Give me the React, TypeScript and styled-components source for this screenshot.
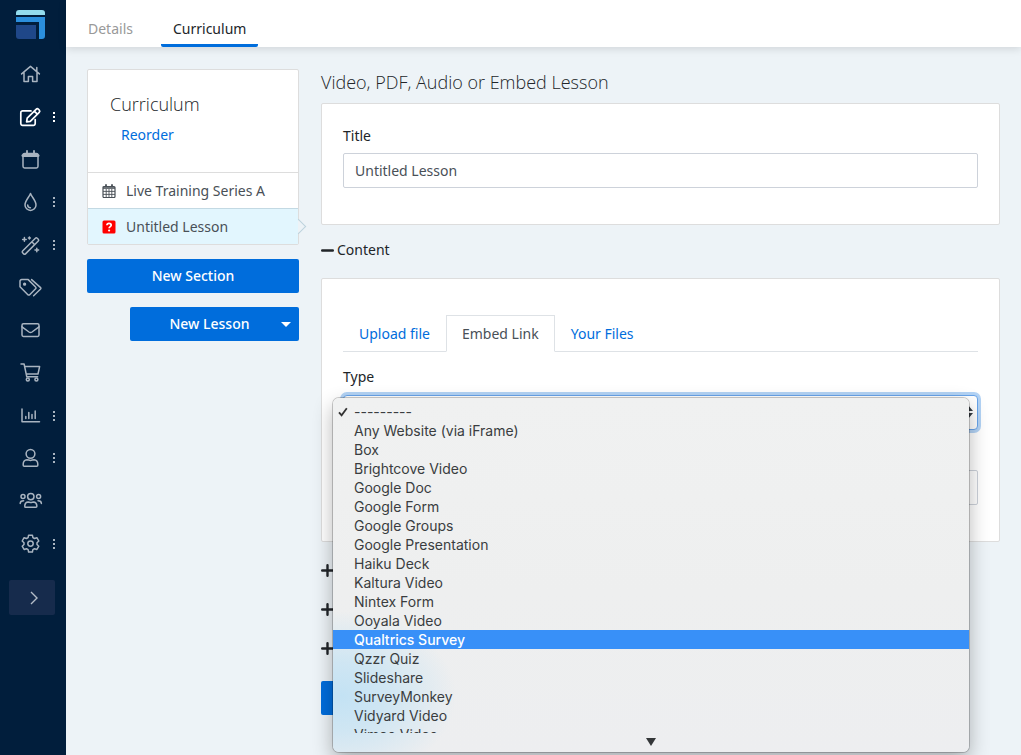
import React from 'react';
import styled, { createGlobalStyle, css } from 'styled-components';

const GlobalStyle = createGlobalStyle`
  *, *::before, *::after { box-sizing: border-box; }
  body {
    margin: 0;
    background: #edf3f7;
    color: #212529;
    font-family: 'Noto Sans', 'Open Sans', sans-serif;
    font-size: 14px;
    line-height: 20px;
  }
  h1, h2, h3, p, ul { margin: 0; padding: 0; }
  ul { list-style: none; }
  button, input, select { font: inherit; }
  a { color: #006ddc; text-decoration: none; }
`;

const Shell = styled.div`
  display: flex;
  min-height: 100vh;
`;

/* ---------- navigation rail ---------- */

const Rail = styled.nav`
  flex: 0 0 66px;
  background: #011e3c;
  display: flex;
  flex-direction: column;
  align-items: center;
  padding-top: 10px;
`;

const LogoLink = styled.a`
  display: block;
  width: 30px;
  height: 30px;
  margin-right: 4px;
  svg { display: block; }
`;

const RailList = styled.ul`
  width: 100%;
  height: 512px;
  margin-top: 13px;
  display: grid;
  grid-template-rows: repeat(12, 1fr);
`;

const RailItem = styled.li`
  display: flex;
  align-items: center;
  padding-left: 19px;
`;

const RailLink = styled.a<{ $active?: boolean }>`
  display: flex;
  align-items: center;
  gap: 9px;
  color: ${(p) => (p.$active ? '#ffffff' : '#a9b4c0')};
  svg {
    display: block;
    fill: none;
    stroke: currentColor;
    stroke-width: ${(p) => (p.$active ? 1.7 : 1.5)};
    stroke-linecap: round;
    stroke-linejoin: round;
  }
`;

const Expand = styled.button`
  width: 46px;
  height: 35px;
  margin: 15px 2px 0 0;
  padding: 0 0 0 4px;
  border: 0;
  border-radius: 2px;
  background: #162b4c;
  color: #b4bdc8;
  display: flex;
  align-items: center;
  justify-content: center;
`;

/* ---------- page frame ---------- */

const Page = styled.div`
  flex: 1;
  min-width: 0;
`;

const TopTabs = styled.header`
  height: 47px;
  padding-left: 10px;
  display: flex;
  gap: 16px;
  background: #ffffff;
  box-shadow: 0 2px 8px rgba(0, 0, 0, 0.12);
`;

const TopTab = styled.a<{ $active?: boolean }>`
  padding: 19px 12px 0;
  color: ${(p) => (p.$active ? '#212529' : '#999999')};
  border-bottom: 3px solid ${(p) => (p.$active ? '#006ddc' : 'transparent')};
  border-radius: 2px;
`;

const Columns = styled.main`
  display: grid;
  grid-template-columns: 212px 1fr;
  gap: 22px;
  padding: 22px 21px 0;
  align-items: start;
`;

/* ---------- outline column ---------- */

const Outline = styled.aside`
  display: flex;
  flex-direction: column;
  align-items: flex-end;
  gap: 14px;
`;

const OutlineCard = styled.section`
  width: 100%;
  background: #ffffff;
  border: 1px solid #dddddd;
  border-radius: 2px;
`;

const OutlineHead = styled.div`
  height: 102px;
  padding: 22px 22px 0;
`;

const Heading = styled.h2`
  font-family: 'Open Sans', 'Noto Sans', sans-serif;
  font-size: 18px;
  font-weight: 300;
  line-height: 24px;
`;

const ReorderLink = styled.a`
  display: inline-block;
  margin: 9px 0 0 11px;
`;

const LessonRow = styled.li<{ $active?: boolean }>`
  position: relative;
  height: 36px;
  border-top: 1px solid #dddddd;
  ${(p) =>
    p.$active &&
    css`
      background: #e2f6fe;
      border-color: #c3d9e3;
      &::after {
        content: '';
        position: absolute;
        right: -6px;
        top: 12px;
        width: 11px;
        height: 11px;
        border: solid #bdd3dd;
        border-width: 1px 1px 0 0;
        background: linear-gradient(45deg, transparent 50%, #edf3f7 50%);
        transform: rotate(45deg);
      }
    `}
`;

const LessonLink = styled.a`
  display: flex;
  align-items: center;
  gap: 10px;
  height: 35px;
  padding-left: 14px;
  color: #495057;
`;

const Primary = styled.button<{ $width: string }>`
  position: relative;
  width: ${(p) => p.$width};
  height: 34px;
  padding: 0;
  border: 0;
  border-radius: 2px;
  background: #006ddc;
  color: #ffffff;
  display: flex;
  align-items: center;
  justify-content: center;
`;

const ButtonText = styled.span<{ $caret?: boolean }>`
  font-weight: 500;
  padding-right: ${(p) => (p.$caret ? '10px' : '0')};
`;

const Caret = styled.span`
  position: absolute;
  right: 8px;
  top: 15px;
  border: 5px solid transparent;
  border-top-color: #ffffff;
  border-bottom: 0;
`;

/* ---------- editor column ---------- */

const Editor = styled.form`
  min-width: 0;
  padding-top: 1px;
`;

const Card = styled.section`
  background: #ffffff;
  border: 1px solid #dddddd;
  border-radius: 2px;
  padding: 22px 21px 36px;
`;

const TitleCard = styled(Card)`
  margin-top: 9px;
`;

const Label = styled.label`
  display: block;
`;

const TextInput = styled.input`
  display: block;
  width: 100%;
  height: 35px;
  padding: 0 11px;
  border: 1px solid #cdd2da;
  border-radius: 2px;
  background: #ffffff;
  color: #495057;
`;

const TitleInput = styled(TextInput)`
  margin-top: 7px;
`;

const SectionToggle = styled.button`
  display: flex;
  align-items: center;
  gap: 3px;
  height: 20px;
  padding: 0;
  border: 0;
  background: none;
  color: #212529;
`;

const ContentToggle = styled(SectionToggle)`
  margin: 15px 0 18px;
`;

const Tabs = styled.ul`
  display: flex;
  margin-top: 14px;
  border-bottom: 1px solid #dee2e6;
`;

const Tab = styled.li<{ $active?: boolean }>`
  margin-bottom: -1px;
  padding: 8px 15px;
  height: 37px;
  border: 1px solid transparent;
  ${(p) =>
    p.$active &&
    css`
      border-color: #dee2e6 #dee2e6 #ffffff;
      background: #ffffff;
      a { color: #495057; }
    `}
`;

const TypeLabel = styled(Label)`
  margin-top: 15px;
`;

const SelectField = styled.div`
  position: relative;
  margin: 8px 0 40px;
`;

const Select = styled.select`
  display: block;
  width: 100%;
  height: 35px;
  padding: 0 11px;
  appearance: none;
  border: 1px solid #68a4ea;
  border-radius: 4px;
  background: #ffffff;
  color: #495057;
  outline: none;
  box-shadow: 0 0 0 3px #b3d3f5;
`;

const Arrows = styled.svg`
  position: absolute;
  right: 5px;
  top: 10px;
`;

const Popup = styled.div`
  position: absolute;
  z-index: 2;
  top: 3px;
  left: -10px;
  right: 9px;
  padding: 4px 0 0;
  border-radius: 6px;
  background:
    radial-gradient(ellipse 115px 85px at 8px 298px, #c3e2f4 0%, rgba(197, 227, 244, 0.75) 40%, rgba(220, 232, 240, 0) 100%),
    linear-gradient(#f0f1f1, #eeefef 55%, #edeef0);
  box-shadow: 0 0 0 1px rgba(0, 0, 0, 0.2), 0 8px 20px rgba(0, 0, 0, 0.3);
`;

const Options = styled.ul`
  height: 331px;
  overflow: hidden;
`;

const Option = styled.li<{ $highlight?: boolean }>`
  display: flex;
  align-items: center;
  height: 19px;
  padding-left: 5px;
  font-family: Inter, 'Liberation Sans', sans-serif;
  font-size: 14px;
  line-height: 19px;
  color: ${(p) => (p.$highlight ? '#ffffff' : '#3a3d40')};
  font-weight: ${(p) => (p.$highlight ? 500 : 400)};
  background: ${(p) => (p.$highlight ? '#3890f8' : 'transparent')};
`;

const Check = styled.span`
  flex: 0 0 16px;
  display: flex;
`;

const MoreArrow = styled.div`
  height: 19px;
  padding-top: 5px;
  display: flex;
  justify-content: center;
  svg { display: block; }
`;

const Collapsed = styled.div`
  display: flex;
  flex-direction: column;
  align-items: flex-start;
  gap: 19px;
  margin: 18px 0 23px;
`;

/* ---------- drawings ---------- */

const icons: Record<string, React.ReactNode> = {
  Home: (
    <path d="M2.6 11.9 11.5 4.4 20.4 11.9M17.8 5.4V9.4M5 10.4V19.4H9.4V14.4H13.6V19.4H18V10.4" />
  ),
  Edit: (
    <path d="M12 5.9H3.6A1.8 1.8 0 0 0 1.8 7.7V18.6A1.8 1.8 0 0 0 3.6 20.4H14.4A1.8 1.8 0 0 0 16.2 18.6V14.6M8.2 13.2 17.1 4.3A1.7 1.7 0 0 1 19.5 4.3L20.2 5A1.7 1.7 0 0 1 20.2 7.4L11.3 16.3 7.6 16.9ZM15.3 6.2 18.3 9.2" />
  ),
  Calendar: (
    <>
      <rect x="4" y="5.4" width="15" height="14.5" rx="1.6" />
      <path d="M4 7.4H19" strokeWidth="3" />
      <path d="M8 2.8V5.4M15 2.8V5.4" strokeWidth="1.8" />
    </>
  ),
  Drop: (
    <path d="M11.5 3.4C12.6 7 17 10.5 17 14.9A5.5 5.5 0 0 1 6 14.9C6 10.5 10.4 7 11.5 3.4ZM8.7 15A2.8 2.8 0 0 0 11.4 17.8" />
  ),
  Wand: (
    <>
      <path d="M3.6 18 16.4 5.2A1.3 1.3 0 0 1 18.2 5.2L19.3 6.3A1.3 1.3 0 0 1 19.3 8.1L6.5 20.9A1.3 1.3 0 0 1 4.7 20.9L3.6 19.8A1.3 1.3 0 0 1 3.6 18ZM12.8 8.8 15.7 11.7" />
      <path d="M5.4 4.6V8.2M3.6 6.4H7.2M10.4 4V6M9.4 5H11.4M17.8 15.2V18.8M16 17H19.6" />
    </>
  ),
  Tags: (
    <>
      <path d="M1 5.3V10.8L8.9 18.7A1.2 1.2 0 0 0 10.7 18.7L16.6 12.8A1.2 1.2 0 0 0 16.6 11L9.2 3.6H2.7A1.7 1.7 0 0 0 1 5.3ZM12.6 3.6 21.6 11.6A1 1 0 0 1 21.6 13L14.6 19.8" />
      <circle cx="5.6" cy="8.2" r="0.9" fill="currentColor" />
    </>
  ),
  Mail: (
    <>
      <rect x="3" y="5.8" width="17" height="12.6" rx="1.4" />
      <path d="M3 8.8 10 14A2.6 2.6 0 0 0 13 14L20 8.8" />
    </>
  ),
  Cart: (
    <>
      <path d="M2 3H5.1L7.8 15.8H18.6M5.8 5.6H20.6L19 13H7.2" />
      <circle cx="8.8" cy="18.4" r="1.5" />
      <circle cx="17.4" cy="18.4" r="1.5" />
    </>
  ),
  Chart: (
    <path d="M3 5V17.8H20.5M6.8 12.6V14.6M9.8 8.4V14.6M13 10.4V14.6M16.2 7V14.6" />
  ),
  Person: (
    <>
      <circle cx="11.5" cy="7.8" r="4.4" />
      <path d="M4.2 19.2V18A4.4 4.4 0 0 1 8 13.8C9.4 13.8 10 14.4 11.5 14.4S13.6 13.8 15 13.8A4.4 4.4 0 0 1 18.8 18V19.2A1 1 0 0 1 17.8 20.2H5.2A1 1 0 0 1 4.2 19.2Z" />
    </>
  ),
  People: (
    <>
      <circle cx="11.8" cy="7.6" r="3.2" />
      <circle cx="4" cy="7.4" r="2" />
      <circle cx="19.6" cy="7.4" r="2" />
      <path d="M5.8 17.4V16.4A3.6 3.6 0 0 1 9.2 13C10.2 13 10.6 13.4 11.8 13.4S13.4 13 14.4 13A3.6 3.6 0 0 1 17.8 16.4V17.4A0.8 0.8 0 0 1 17 18.2H6.6A0.8 0.8 0 0 1 5.8 17.4ZM1.2 14.4C1.2 12.6 2.2 11.8 4.6 11.8M22.4 14.4C22.4 12.6 21.4 11.8 19 11.8" />
    </>
  ),
  Settings: (
    <>
      <path d="M9.6 3.2H13.4L13.9 5.6 15.5 6.5 17.9 5.7 19.8 9 18 10.7V12.5L19.8 14.2 17.9 17.5 15.5 16.7 13.9 17.6 13.4 20H9.6L9.1 17.6 7.5 16.7 5.1 17.5 3.2 14.2 5 12.5V10.7L3.2 9 5.1 5.7 7.5 6.5 9.1 5.6Z" />
      <circle cx="11.5" cy="11.6" r="2.7" />
    </>
  ),
};

const withMenu = ['Edit', 'Drop', 'Wand', 'Chart', 'Person', 'Settings'];

const options = [
  '---------',
  'Any Website (via iFrame)',
  'Box',
  'Brightcove Video',
  'Google Doc',
  'Google Form',
  'Google Groups',
  'Google Presentation',
  'Haiku Deck',
  'Kaltura Video',
  'Nintex Form',
  'Ooyala Video',
  'Qualtrics Survey',
  'Qzzr Quiz',
  'Slideshare',
  'SurveyMonkey',
  'Vidyard Video',
  'Vimeo Video',
];

const Logo = () => (
  <svg width="30" height="30" viewBox="0 0 30 30">
    <path d="M3 0H26A3 3 0 0 1 29 3V5H0V3A3 3 0 0 1 3 0Z" fill="#93dcee" />
    <path d="M0 7H29V26A3 3 0 0 1 26 29H23V12H0Z" fill="#2b8fdd" />
    <path d="M0 15H20V29H3A3 3 0 0 1 0 26Z" fill="#1f4788" />
  </svg>
);

const Dots = () => (
  <svg width="4" height="10" viewBox="0 0 4 10">
    <path d="M1 0H3V2H1ZM1 4H3V6H1ZM1 8H3V10H1Z" fill="currentColor" stroke="none" />
  </svg>
);

const GridCalendar = () => (
  <svg width="14" height="14" viewBox="0 0 14 14" fill="none" stroke="#495057">
    <rect x="1" y="2.5" width="12" height="11" rx="1" strokeWidth="1.2" />
    <path d="M1 4H13" strokeWidth="1.6" />
    <path d="M4 0.3V3M10 0.3V3" strokeWidth="1.8" />
    <path d="M1 7.4H13M1 10.4H13M4.2 5V13M7 5V13M9.8 5V13" strokeWidth="0.9" />
  </svg>
);

const QuestionBadge = () => (
  <svg width="14" height="14" viewBox="0 0 14 14" fill="none">
    <rect x="0.5" y="0.5" width="13" height="13" rx="1.5" fill="#ff0000" />
    <path d="M4.9 5.2C5 3.9 5.9 3.3 7 3.3S9.2 4 9.2 5.2C9.2 6.6 7.1 6.7 7.1 8.3" stroke="#fff" strokeWidth="1.7" />
    <circle cx="7.1" cy="10.5" r="1.1" fill="#fff" />
  </svg>
);

const Sign = ({ plus }: { plus?: boolean }) => (
  <svg width="13" height="13" viewBox="0 0 13 13" fill="none" stroke="#212529" strokeWidth="2.4" strokeLinecap="round">
    <path d={plus ? 'M1.2 6.5H11.8M6.5 1.2V11.8' : 'M1.2 6.5H11.8'} />
  </svg>
);

export default function App() {
  return (
    <>
      <GlobalStyle />
      <Shell>
        <Rail aria-label="Main">
          <LogoLink href="#" aria-label="Dashboard">
            <Logo />
          </LogoLink>
          <RailList>
            {Object.keys(icons).map((name) => (
              <RailItem key={name}>
                <RailLink href="#" aria-label={name} $active={name === 'Edit'}>
                  <svg width="24" height="24" viewBox="0 0 24 24">
                    {icons[name]}
                  </svg>
                  {withMenu.includes(name) && <Dots />}
                </RailLink>
              </RailItem>
            ))}
          </RailList>
          <Expand type="button" aria-label="Expand menu">
            <svg width="8" height="14" viewBox="0 0 8 14" fill="none" stroke="currentColor" strokeWidth="1.4">
              <path d="M1 1 7 7 1 13" />
            </svg>
          </Expand>
        </Rail>

        <Page>
          <TopTabs>
            <TopTab href="#">Details</TopTab>
            <TopTab href="#" $active aria-current="page">
              Curriculum
            </TopTab>
          </TopTabs>

          <Columns>
            <Outline>
              <OutlineCard>
                <OutlineHead>
                  <Heading>Curriculum</Heading>
                  <ReorderLink href="#">Reorder</ReorderLink>
                </OutlineHead>
                <ul>
                  <LessonRow>
                    <LessonLink href="#">
                      <GridCalendar />
                      Live Training Series A
                    </LessonLink>
                  </LessonRow>
                  <LessonRow $active>
                    <LessonLink href="#">
                      <QuestionBadge />
                      Untitled Lesson
                    </LessonLink>
                  </LessonRow>
                </ul>
              </OutlineCard>
              <Primary type="button" $width="100%">
                <ButtonText>New Section</ButtonText>
              </Primary>
              <Primary type="button" $width="calc(100% - 43px)">
                <ButtonText $caret>New Lesson</ButtonText>
                <Caret />
              </Primary>
            </Outline>

            <Editor>
              <Heading>Video, PDF, Audio or Embed Lesson</Heading>
              <TitleCard>
                <Label htmlFor="title">Title</Label>
                <TitleInput id="title" type="text" defaultValue="Untitled Lesson" />
              </TitleCard>

              <ContentToggle type="button" aria-expanded="true">
                <Sign />
                Content
              </ContentToggle>

              <Card>
                <Tabs>
                  <Tab><a href="#">Upload file</a></Tab>
                  <Tab $active><a href="#">Embed Link</a></Tab>
                  <Tab><a href="#">Your Files</a></Tab>
                </Tabs>
                <TypeLabel htmlFor="type">Type</TypeLabel>
                <SelectField>
                  <Select id="type" defaultValue={options[0]}>
                    {options.map((o) => (
                      <option key={o}>{o}</option>
                    ))}
                  </Select>
                  <Arrows width="10" height="14" viewBox="0 0 10 14" fill="#343a40">
                    <path d="M0 6 5 0 10 6ZM0 8 5 14 10 8Z" />
                  </Arrows>
                  <Popup>
                    <Options role="listbox" aria-label="Type">
                      {options.map((o, i) => (
                        <Option
                          key={o}
                          role="option"
                          aria-selected={i === 0}
                          $highlight={o === 'Qualtrics Survey'}
                        >
                          <Check>
                            {i === 0 && (
                              <svg width="10" height="10" viewBox="0 0 10 10" fill="none" stroke="#333" strokeWidth="1.8">
                                <path d="M1 5.4 3.6 8.4 8.8 1.2" />
                              </svg>
                            )}
                          </Check>
                          {o}
                        </Option>
                      ))}
                    </Options>
                    <MoreArrow>
                      <svg width="10" height="8" viewBox="0 0 10 8" fill="#333638">
                        <path d="M0 0H10L5 8Z" />
                      </svg>
                    </MoreArrow>
                  </Popup>
                </SelectField>
                <TextInput type="text" aria-label="Link" />
              </Card>

              <Collapsed>
                <SectionToggle type="button" aria-label="Settings"><Sign plus /></SectionToggle>
                <SectionToggle type="button" aria-label="Availability"><Sign plus /></SectionToggle>
                <SectionToggle type="button" aria-label="Completion"><Sign plus /></SectionToggle>
              </Collapsed>
              <Primary type="submit" $width="80px" aria-label="Save" />
            </Editor>
          </Columns>
        </Page>
      </Shell>
    </>
  );
}
